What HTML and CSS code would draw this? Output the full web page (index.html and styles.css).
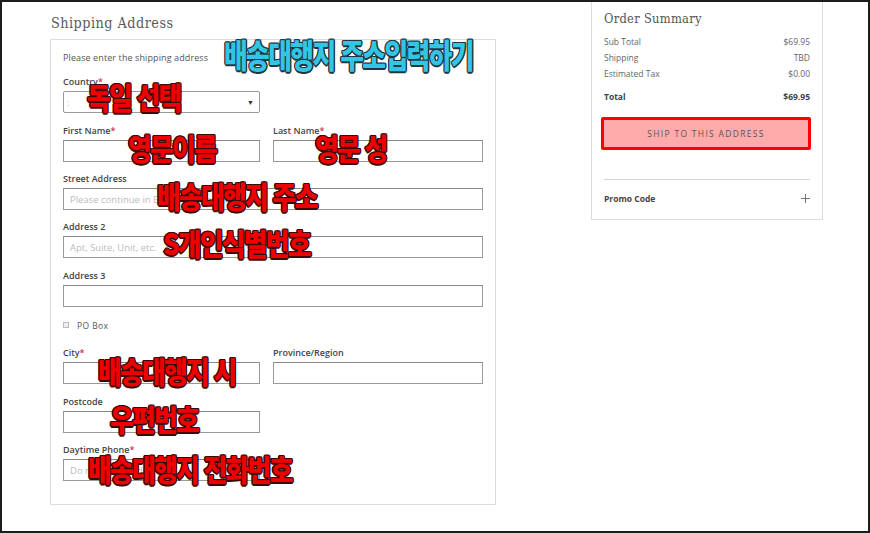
FILE: index.html
```html
<!DOCTYPE html>
<html lang="ko">
<head>
<meta charset="utf-8">
<title>Shipping Address</title>
<link rel="stylesheet" href="styles.css">
</head>
<body>
<div class="frame">
  <main class="main">
    <h1 class="title">Shipping Address</h1>
    <section class="form-box">
      <p class="intro">Please enter the shipping address</p>

      <div class="field f-country">
        <div class="label">Country<span class="req">*</span></div>
        <div class="select"><span class="sel-val">:</span><span class="arrow">&#9660;</span></div>
      </div>

      <div class="row">
        <div class="field half">
          <div class="label">First Name<span class="req">*</span></div>
          <div class="input"></div>
        </div>
        <div class="field wide">
          <div class="label">Last Name<span class="req">*</span></div>
          <div class="input"></div>
        </div>
      </div>

      <div class="field full">
        <div class="label">Street Address</div>
        <div class="input"><span class="ph">Please continue in English characters</span></div>
      </div>

      <div class="field full loose">
        <div class="label">Address 2</div>
        <div class="input"><span class="ph">Apt, Suite, Unit, etc.</span></div>
      </div>

      <div class="field full loose">
        <div class="label">Address 3</div>
        <div class="input"></div>
      </div>

      <div class="pobox"><span class="check"></span><span class="po-label">PO Box</span></div>

      <div class="row">
        <div class="field half loose">
          <div class="label">City<span class="req">*</span></div>
          <div class="input"></div>
        </div>
        <div class="field wide loose">
          <div class="label">Province/Region</div>
          <div class="input"></div>
        </div>
      </div>

      <div class="field half">
        <div class="label">Postcode</div>
        <div class="input"></div>
      </div>

      <div class="field half last">
        <div class="label">Daytime Phone<span class="req">*</span></div>
        <div class="input"><span class="ph">Do not include dashes</span></div>
      </div>

      <div class="note cyan n-top">배송대행지 주소입력하기</div>
      <div class="note red n-country">독일 선택</div>
      <div class="note red n-first">영문이름</div>
      <div class="note red n-last">영문 성</div>
      <div class="note red n-street">배송대행지 주소</div>
      <div class="note red n-addr2">S개인식별번호</div>
      <div class="note red n-city">배송대행지 시</div>
      <div class="note red n-post">우편번호</div>
      <div class="note red n-phone">배송대행지 전화번호</div>
    </section>
  </main>

  <aside class="summary">
    <h2 class="sum-title">Order Summary</h2>
    <div class="sum-row"><span>Sub Total</span><span>$69.95</span></div>
    <div class="sum-row"><span>Shipping</span><span>TBD</span></div>
    <div class="sum-row"><span>Estimated Tax</span><span>$0.00</span></div>
    <div class="sum-row total"><span>Total</span><span>$69.95</span></div>
    <div class="ship-btn">SHIP TO THIS ADDRESS</div>
    <div class="promo">
      <span>Promo Code</span>
      <svg class="plus" width="9" height="9" viewBox="0 0 9 9"><path d="M4.5 0V9M0 4.5H9" stroke="#777" stroke-width="1"/></svg>
    </div>
  </aside>
</div>
</body>
</html>
```

FILE: styles.css
```css
* { box-sizing: border-box; }
html, body { margin: 0; padding: 0; background: #fff; }
body { font-family: "Open Sans", "Liberation Sans", sans-serif; color: #444; }

.frame {
  width: 870px;
  height: 533px;
  border: 2px solid #1c1c1c;
  display: flex;
  align-items: flex-start;
  overflow: hidden;
  padding-left: 48px;
}

.main { width: 446px; }

.title {
  margin: 0;
  height: 37px;
  padding-top: 12px;
  padding-left: 1px;
  font-family: "DejaVu Serif", "Liberation Serif", serif;
  font-weight: normal;
  font-size: 14px;
  line-height: 18px;
  letter-spacing: 0.5px;
  color: #5a5a5a;
  transform: scaleX(0.92);
  transform-origin: left;
}

.form-box {
  position: relative;
  border: 1px solid #dcdcdc;
  padding: 12px 11px 23px 12px;
  height: 466px;
}

.intro {
  margin: 0 0 12px;
  font-size: 9px;
  line-height: 12px;
  letter-spacing: 0.1px;
  color: #555;
}

.field { margin-bottom: 11px; }
.field.loose { margin-bottom: 12px; }
.field.last { margin-bottom: 0; }
.f-country { margin-bottom: 12px; }

.label {
  font-size: 9px;
  line-height: 12px;
  height: 12px;
  margin-bottom: 3px;
  font-weight: 600;
  color: #444;
}
.req { color: #c8334f; }

.input {
  height: 22px;
  border: 1px solid #999;
  border-top-color: #888;
  padding-left: 6px;
  display: flex;
  align-items: center;
}
.ph { font-size: 9.5px; color: #bbb; }

.select {
  width: 197px;
  height: 22px;
  border: 1px solid #999;
  border-radius: 2px;
  display: flex;
  align-items: center;
  justify-content: space-between;
  padding: 0 5px 0 3px;
  font-size: 9px;
  color: #bbb;
}
.arrow { font-size: 7px; color: #333; }

.row { display: flex; gap: 13px; }
.half { width: 197px; }
.wide { width: 210px; }
.full { width: 420px; }

.pobox {
  display: flex;
  align-items: center;
  height: 12px;
  margin-bottom: 16px;
}
.check {
  width: 6px;
  height: 6px;
  border: 1px solid #bbb;
  background: #eee;
  margin-right: 8px;
}
.po-label { font-size: 8.5px; color: #555; letter-spacing: 0.4px; }

.note {
  position: absolute;
  font-family: "Noto Sans CJK KR", sans-serif;
  font-weight: 900;
  line-height: 1;
  white-space: nowrap;
  font-size: 30px;
  letter-spacing: -2px;
  transform: scaleX(0.86);
  transform-origin: left top;
}
.note.red {
  color: #ee0000;
  text-shadow: -1px -1px 0 #3a0a0a, 1px -1px 0 #3a0a0a, -1px 1px 0 #3a0a0a, 1px 1px 0 #3a0a0a,
               0 1.5px 0 #3a0a0a, 0 -1.5px 0 #3a0a0a, 1.5px 0 0 #3a0a0a, -1.5px 0 0 #3a0a0a;
}
.note.cyan {
  color: #34c4e4;
  font-size: 33px;
  letter-spacing: -2px;
  transform: scaleX(0.78);
  text-shadow: -1px -1px 0 #1f3540, 1px -1px 0 #1f3540, -1px 1px 0 #1f3540, 1px 1px 0 #1f3540,
               0 1.5px 0 #1f3540, 0 -1.5px 0 #1f3540, 1.5px 0 0 #1f3540, -1.5px 0 0 #1f3540;
}
.n-top { left: 173px; top: -2px; }
.n-country { left: 36px; top: 41px; }
.n-first { left: 77px; top: 92px; }
.n-last { left: 264px; top: 92px; }
.n-street { left: 106px; top: 140px; }
.n-addr2 { left: 112px; top: 187px; }
.n-city { left: 47px; top: 315px; }
.n-post { left: 59px; top: 363px; }
.n-phone { left: 37px; top: 413px; }

.summary {
  margin-left: 95px;
  margin-top: -2px;
  width: 232px;
  border: 1px solid #dcdcdc;
  border-top: none;
  padding: 11px 12px 0 12px;
  height: 220px;
  color: #666;
}
.sum-title {
  margin: 0 0 7px;
  font-family: "DejaVu Serif", "Liberation Serif", serif;
  font-weight: normal;
  font-size: 12.5px;
  line-height: 16px;
  letter-spacing: 0.3px;
  color: #555;
  transform: scaleX(0.92);
  transform-origin: left;
}
.sum-row {
  display: flex;
  justify-content: space-between;
  font-size: 8.5px;
  line-height: 16px;
  color: #666;
}
.sum-row.total {
  margin-top: 7px;
  font-weight: 700;
  color: #444;
}
.ship-btn {
  margin: 12px -1px 0 -3px;
  height: 33px;
  border: 3px solid #ff0000;
  border-radius: 2px;
  background: #ffabab;
  display: flex;
  align-items: center;
  justify-content: center;
  font-size: 8.5px;
  letter-spacing: 1.3px;
  color: #555;
}
.promo {
  margin-top: 29px;
  border-top: 1px solid #d4d4d4;
  height: 38px;
  display: flex;
  justify-content: space-between;
  align-items: center;
  font-size: 8.5px;
  font-weight: 700;
  color: #444;
}
```
